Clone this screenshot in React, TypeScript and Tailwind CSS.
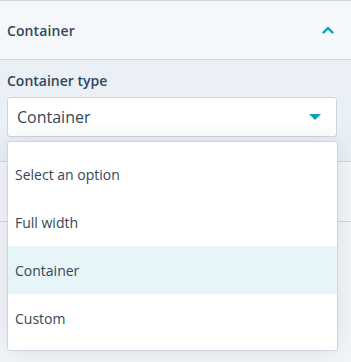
export default function App() {
  const options = ["Select an option", "Full width", "Container", "Custom"];
  return (
    <div className="relative h-[362px] w-[351px] overflow-hidden bg-[#f3f6f9] font-['Open_Sans',sans-serif] text-[#33475b]">
      {/* accordion header */}
      <div className="flex h-[60px] items-center justify-between border-y border-[#cbd6e2] bg-[#f5f8fa] pl-[7px] pr-[17px]">
        <span className="text-[14px] font-semibold tracking-[0.1px]">Container</span>
        <svg width="12" height="8" viewBox="0 0 12 8" className="text-[#00a4bd]">
          <path d="M1.5 6.5 L6 2 L10.5 6.5" fill="none" stroke="currentColor" strokeWidth="2.4" strokeLinecap="round" strokeLinejoin="round" />
        </svg>
      </div>

      {/* accordion body */}
      <div className="h-[102px] border-b border-[#cbd6e2] bg-[#eaf0f6] px-[7px] pt-[11px]">
        <div className="text-[14px] font-semibold leading-5">Container type</div>
        <div className="mt-[6px] flex h-[40px] w-[330px] items-center justify-between rounded-[3px] border border-[#cbd6e2] bg-white pl-[9px] pr-[15px]">
          <span className="text-[16px]">Container</span>
          <svg width="12" height="6" viewBox="0 0 12 6" className="text-[#00a4bd]">
            <path d="M0 0 H12 L6 6 Z" fill="currentColor" />
          </svg>
        </div>
      </div>

      {/* next collapsed section */}
      <div className="h-[60px] border-b border-[#cbd6e2] bg-[#f3f6f9]" />

      {/* dropdown menu */}
      <div className="absolute left-[7px] top-[141px] w-[331px] rounded-[3px] border border-[#cbd6e2] bg-white py-[8px] shadow-[0_1px_24px_0_rgba(45,62,80,0.12)]">
        {options.map((o) => (
          <div
            key={o}
            className={`flex h-[48px] items-center px-[7px] text-[14px] ${o === "Container" ? "bg-[#e5f5f8]" : ""}`}
          >
            {o}
          </div>
        ))}
      </div>
    </div>
  );
}
